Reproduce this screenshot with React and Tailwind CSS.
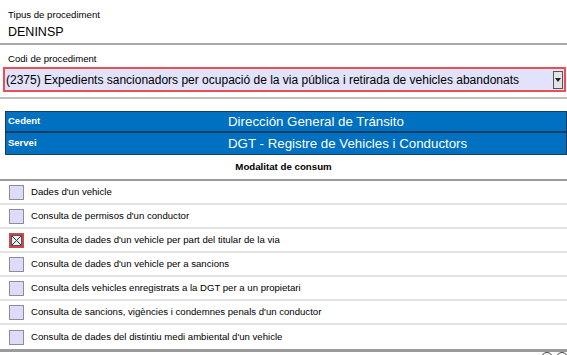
import React from "react";

const items = [
  { label: "Dades d'un vehicle", checked: false },
  { label: "Consulta de permisos d'un conductor", checked: false },
  { label: "Consulta de dades d'un vehicle per part del titular de la via", checked: true },
  { label: "Consulta de dades d'un vehicle per a sancions", checked: false },
  { label: "Consulta dels vehicles enregistrats a la DGT per a un propietari", checked: false },
  { label: "Consulta de sancions, vigències i condemnes penals d'un conductor", checked: false },
  { label: "Consulta de dades del distintiu medi ambiental d'un vehicle", checked: false },
];

function Checkbox({ checked }) {
  if (checked) {
    return (
      <div className="w-[15px] h-[15px] border-2 border-[#d04848] bg-[#ececf4] flex items-center justify-center">
        <svg width="11" height="11" viewBox="0 0 11 11">
          <rect x="0.5" y="0.5" width="10" height="10" fill="none" stroke="#555" strokeWidth="1" />
          <path d="M1 1 L10 10 M10 1 L1 10" stroke="#333" strokeWidth="1" />
        </svg>
      </div>
    );
  }
  return <div className="w-[15px] h-[15px] border border-[#8c8c9c] bg-[#dcdcf8]" />;
}

export default function App() {
  return (
    <div
      className="w-[567px] h-[355px] overflow-hidden bg-white text-black relative"
      style={{ fontFamily: '"Liberation Sans", Arial, sans-serif' }}
    >
      <div className="pl-[8px] pt-[8px] h-[43px]">
        <div className="text-[9.6px] leading-[14px] h-[14px]">Tipus de procediment</div>
        <div className="text-[12.5px] leading-[18px] mt-[1px]">DENINSP</div>
      </div>
      <div className="h-[2px] bg-[#a8a8a8]" />
      <div className="pt-[7px] h-[52px]">
        <div className="pl-[8px] text-[9.6px] leading-[14px] h-[14px]">Codi de procediment</div>
        <div className="ml-[3px] mr-[1px] mt-[1px] h-[25px] border-2 border-[#e85058] bg-[#e2e2fa] flex items-center">
          <div className="flex-1 pl-[1px] text-[12px] leading-[18px] whitespace-nowrap overflow-hidden">
            (2375) Expedients sancionadors per ocupació de la via pública i retirada de vehicles abandonats
          </div>
          <div className="w-[10px] h-[18px] mr-[1px] border border-[#555] bg-[#e4e4e4] flex items-center justify-center">
            <svg width="6" height="4" viewBox="0 0 6 4">
              <path d="M0 0 L6 0 L3 4 Z" fill="#222" />
            </svg>
          </div>
        </div>
      </div>
      <div className="h-[2px] bg-[#c0c0c0]" />
      <div className="mt-[12px] ml-[5px] border border-[#1a3a60] bg-[#0070c0] text-white">
        <div className="flex h-[21px] items-center border-b-2 border-[#143a66]">
          <div className="w-[222px] pl-[2px] text-[9.5px] font-bold">Cedent</div>
          <div className="text-[13.3px] leading-[18px]">Dirección General de Tránsito</div>
        </div>
        <div className="flex h-[21px] items-center">
          <div className="w-[222px] pl-[2px] text-[9.5px] font-bold">Servei</div>
          <div className="text-[13.3px] leading-[18px]">DGT - Registre de Vehicles i Conductors</div>
        </div>
      </div>
      <div className="h-[24px] flex items-center justify-center text-[9.7px] font-bold">
        Modalitat de consum
      </div>
      <div className="h-[2px] bg-[#9a9a9a]" />
      <div>
        {items.map((it, i) => (
          <div
            key={i}
            className={
              "h-[24px] flex items-center " +
              (i < items.length - 1 ? "border-b-2 border-[#e2e2e2]" : "")
            }
          >
            <div className="w-[31px] pl-[9px]">
              <Checkbox checked={it.checked} />
            </div>
            <div className="text-[9.6px] leading-[14px]">{it.label}</div>
          </div>
        ))}
      </div>
      <div className="h-[3px] bg-[#9a9a9a]" />
      <div className="absolute left-[541px] top-[352px] w-[12px] h-[12px] rounded-full border border-[#444]" />
      <div className="absolute left-[556px] top-[352px] w-[12px] h-[12px] rounded-full border border-[#444]" />
    </div>
  );
}
